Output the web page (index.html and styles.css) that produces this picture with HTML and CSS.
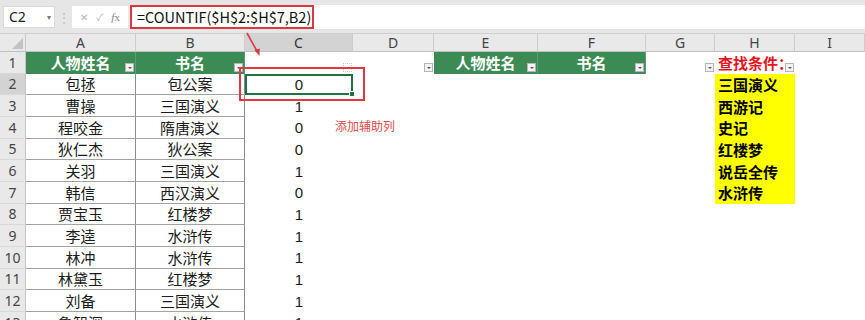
FILE: index.html
```html
<!DOCTYPE html>
<html lang="zh">
<head>
<meta charset="utf-8">
<link rel="stylesheet" href="styles.css">
</head>
<body>
<div class="app">
  <div class="toolbar">
    <div class="namebox"><span>C2</span><span class="nb-arrow">▾</span></div>
    <div class="sep">⋮</div>
    <div class="fxbox"><span>✕</span><span>✓</span><span class="fx"><i>f</i>x</span></div>
    <div class="formulabar"><div class="formula">=COUNTIF($H$2:$H$7,B2)</div></div>
  </div>
  <div class="sheet">
    <div class="corner"><span class="tri"></span></div>
    <div class="ch">A</div><div class="ch">B</div><div class="ch sel">C</div><div class="ch">D</div><div class="ch">E</div><div class="ch">F</div><div class="ch">G</div><div class="ch">H</div><div class="ch">I</div>

    <div class="rh">1</div>
    <div class="c hd">人物姓名<span class="flt"></span></div>
    <div class="c hd">书名<span class="flt"></span></div>
    <div class="c e"><span class="flt faint"></span></div>
    <div class="c e"><span class="flt"></span></div>
    <div class="c hd">人物姓名<span class="flt"></span></div>
    <div class="c hd">书名<span class="flt"></span></div>
    <div class="c e"><span class="flt"></span></div>
    <div class="c cond">查找条件：<span class="flt"></span></div>
    <div class="c e"></div>

    <div class="rh rsel">2</div>
    <div class="c t">包拯</div><div class="c t">包公案</div><div class="c n active">0<span class="handle"></span></div><div class="c e"></div><div class="c e"></div><div class="c e"></div><div class="c e"></div><div class="c y">三国演义</div><div class="c e"></div>

    <div class="rh">3</div>
    <div class="c t">曹操</div><div class="c t">三国演义</div><div class="c n">1</div><div class="c e"></div><div class="c e"></div><div class="c e"></div><div class="c e"></div><div class="c y">西游记</div><div class="c e"></div>

    <div class="rh">4</div>
    <div class="c t">程咬金</div><div class="c t">隋唐演义</div><div class="c n">0</div><div class="c e"></div><div class="c e"></div><div class="c e"></div><div class="c e"></div><div class="c y">史记</div><div class="c e"></div>

    <div class="rh">5</div>
    <div class="c t">狄仁杰</div><div class="c t">狄公案</div><div class="c n">0</div><div class="c e"></div><div class="c e"></div><div class="c e"></div><div class="c e"></div><div class="c y">红楼梦</div><div class="c e"></div>

    <div class="rh">6</div>
    <div class="c t">关羽</div><div class="c t">三国演义</div><div class="c n">1</div><div class="c e"></div><div class="c e"></div><div class="c e"></div><div class="c e"></div><div class="c y">说岳全传</div><div class="c e"></div>

    <div class="rh">7</div>
    <div class="c t">韩信</div><div class="c t">西汉演义</div><div class="c n">0</div><div class="c e"></div><div class="c e"></div><div class="c e"></div><div class="c e"></div><div class="c y">水浒传</div><div class="c e"></div>

    <div class="rh">8</div>
    <div class="c t">贾宝玉</div><div class="c t">红楼梦</div><div class="c n">1</div><div class="c e"></div><div class="c e"></div><div class="c e"></div><div class="c e"></div><div class="c e"></div><div class="c e"></div>

    <div class="rh">9</div>
    <div class="c t">李逵</div><div class="c t">水浒传</div><div class="c n">1</div><div class="c e"></div><div class="c e"></div><div class="c e"></div><div class="c e"></div><div class="c e"></div><div class="c e"></div>

    <div class="rh">10</div>
    <div class="c t">林冲</div><div class="c t">水浒传</div><div class="c n">1</div><div class="c e"></div><div class="c e"></div><div class="c e"></div><div class="c e"></div><div class="c e"></div><div class="c e"></div>

    <div class="rh">11</div>
    <div class="c t">林黛玉</div><div class="c t">红楼梦</div><div class="c n">1</div><div class="c e"></div><div class="c e"></div><div class="c e"></div><div class="c e"></div><div class="c e"></div><div class="c e"></div>

    <div class="rh">12</div>
    <div class="c t">刘备</div><div class="c t">三国演义</div><div class="c n">1</div><div class="c e"></div><div class="c e"></div><div class="c e"></div><div class="c e"></div><div class="c e"></div><div class="c e"></div>

    <div class="rh">13</div>
    <div class="c t">鲁智深</div><div class="c t">水浒传</div><div class="c n">1</div><div class="c e"></div><div class="c e"></div><div class="c e"></div><div class="c e"></div><div class="c e"></div><div class="c e"></div>
  </div>

  <div class="redbox"></div>
  <svg class="arrow" width="30" height="40" viewBox="0 0 30 40">
    <line x1="4" y1="2" x2="15" y2="22" stroke="#d83a3f" stroke-width="1.6"/>
    <path d="M11.5 19 L16.5 25 L16.8 17.5 Z" fill="#d83a3f"/>
  </svg>
  <div class="note">添加辅助列</div>
</div>
</body>
</html>
```

FILE: styles.css
```css
* { box-sizing: border-box; }
html, body { margin: 0; padding: 0; }
body {
  width: 865px;
  height: 320px;
  overflow: hidden;
  background: #fff;
  font-family: "Noto Sans CJK SC", "Noto Sans", sans-serif;
}
.app { position: relative; width: 865px; height: 320px; overflow: hidden; }

.toolbar {
  height: 34px;
  background: #e6e6e6;
  display: flex;
  align-items: center;
  padding-left: 3px;
  border-bottom: 1px solid #d0d0d0;
}
.namebox {
  width: 52px;
  height: 22px;
  background: #fff;
  border: 1px solid #dadada;
  display: flex;
  align-items: center;
  justify-content: space-between;
  padding: 0 3px 0 5px;
  font-family: "Noto Sans", sans-serif;
  font-size: 14px;
  color: #222;
}
.nb-arrow { font-size: 8px; color: #777; }
.sep { width: 17px; text-align: center; color: #bdbdbd; font-size: 12px; }
.fxbox {
  width: 56px;
  height: 22px;
  background: #fff;
  display: flex;
  align-items: center;
  justify-content: space-around;
  padding: 0 4px;
  font-size: 10px;
  color: #b4b4b4;
}
.fx { font-family: "Liberation Serif", serif; font-size: 11px; color: #888; }
.formulabar {
  flex: 1;
  height: 24px;
  margin-left: 2px;
  background: #fff;
  display: flex;
  align-items: center;
}
.formula {
  width: 184px;
  height: 24px;
  border: 2px solid #d8393e;
  padding-left: 5px;
  display: flex;
  align-items: center;
  font-family: "Noto Sans CJK SC", sans-serif;
  font-size: 14.5px;
  color: #111;
  white-space: nowrap;
}

.sheet {
  display: grid;
  grid-template-columns: 26px 110px 109px 108px 81px 104px 108px 69px 80px 70px;
  grid-template-rows: 18px repeat(13, 21.67px);
}
.corner { background: #e9e9e9; border-right: 1px solid #c8c8c8; border-bottom: 1px solid #c0c0c0; position: relative; }
.tri {
  position: absolute; right: 2px; bottom: 2px;
  width: 0; height: 0;
  border-left: 11px solid transparent;
  border-bottom: 11px solid #c3c3c3;
}
.ch {
  background: #e9e9e9;
  border-right: 1px solid #cdcdcd;
  border-bottom: 1px solid #c0c0c0;
  font-family: "Noto Sans", sans-serif;
  font-size: 14px;
  color: #444;
  display: flex; align-items: center; justify-content: center;
  line-height: 1;
}
.ch.sel { background: #d3d3d3; color: #333; }
.rh {
  background: #e9e9e9;
  border-right: 1px solid #c6c6c6;
  border-bottom: 1px solid #d8d8d8;
  font-family: "Noto Sans", sans-serif;
  font-size: 14px;
  color: #444;
  display: flex; align-items: center; justify-content: center;
}
.rh.rsel { background: #d3d3d3; }

.c {
  position: relative;
  display: flex; align-items: center; justify-content: center;
  font-size: 15px;
  color: #1b1b1b;
  white-space: nowrap;
}
.hd {
  background: #3d8b54;
  color: #fff;
  font-weight: bold;
  border-right: 1px solid #5c9c6f;
}
.t {
  border-right: 1px solid #8c8c8c;
  border-bottom: 1px solid #a3a3a3;
}
.n { font-family: "Liberation Sans", sans-serif; font-size: 15px; }
.active { border: 2px solid #217346; }
.handle {
  position: absolute; right: -4px; bottom: -4px;
  width: 6px; height: 6px; background: #217346; border: 1px solid #fff;
}
.cond {
  justify-content: flex-start;
  padding-left: 3px;
  color: #e8141c;
  font-weight: bold;
  font-size: 15px;
}
.y {
  background: #ffff00;
  justify-content: flex-start;
  padding-left: 3px;
  font-weight: bold;
  color: #000;
}
.flt {
  position: absolute; right: 1px; bottom: 2px;
  width: 9px; height: 9px;
  background: #f3f3f3;
  border: 1px solid #b5b5b5;
}
.flt::after {
  content: "";
  position: absolute; left: 2px; top: 3px;
  border-left: 2px solid transparent;
  border-right: 2px solid transparent;
  border-top: 2px solid #555;
}
.flt.faint { background: #fff; border: 1px dotted #c8c8c8; }
.flt.faint::after { border-top-color: #bbb; }

.redbox {
  position: absolute;
  left: 239px; top: 67px;
  width: 126px; height: 34px;
  border: 2px solid #e0393f;
}
.arrow { position: absolute; left: 243px; top: 31px; }
.note {
  position: absolute;
  left: 335px; top: 117px;
  font-size: 12px;
  color: #e04a4a;
  line-height: 18px;
}
```
